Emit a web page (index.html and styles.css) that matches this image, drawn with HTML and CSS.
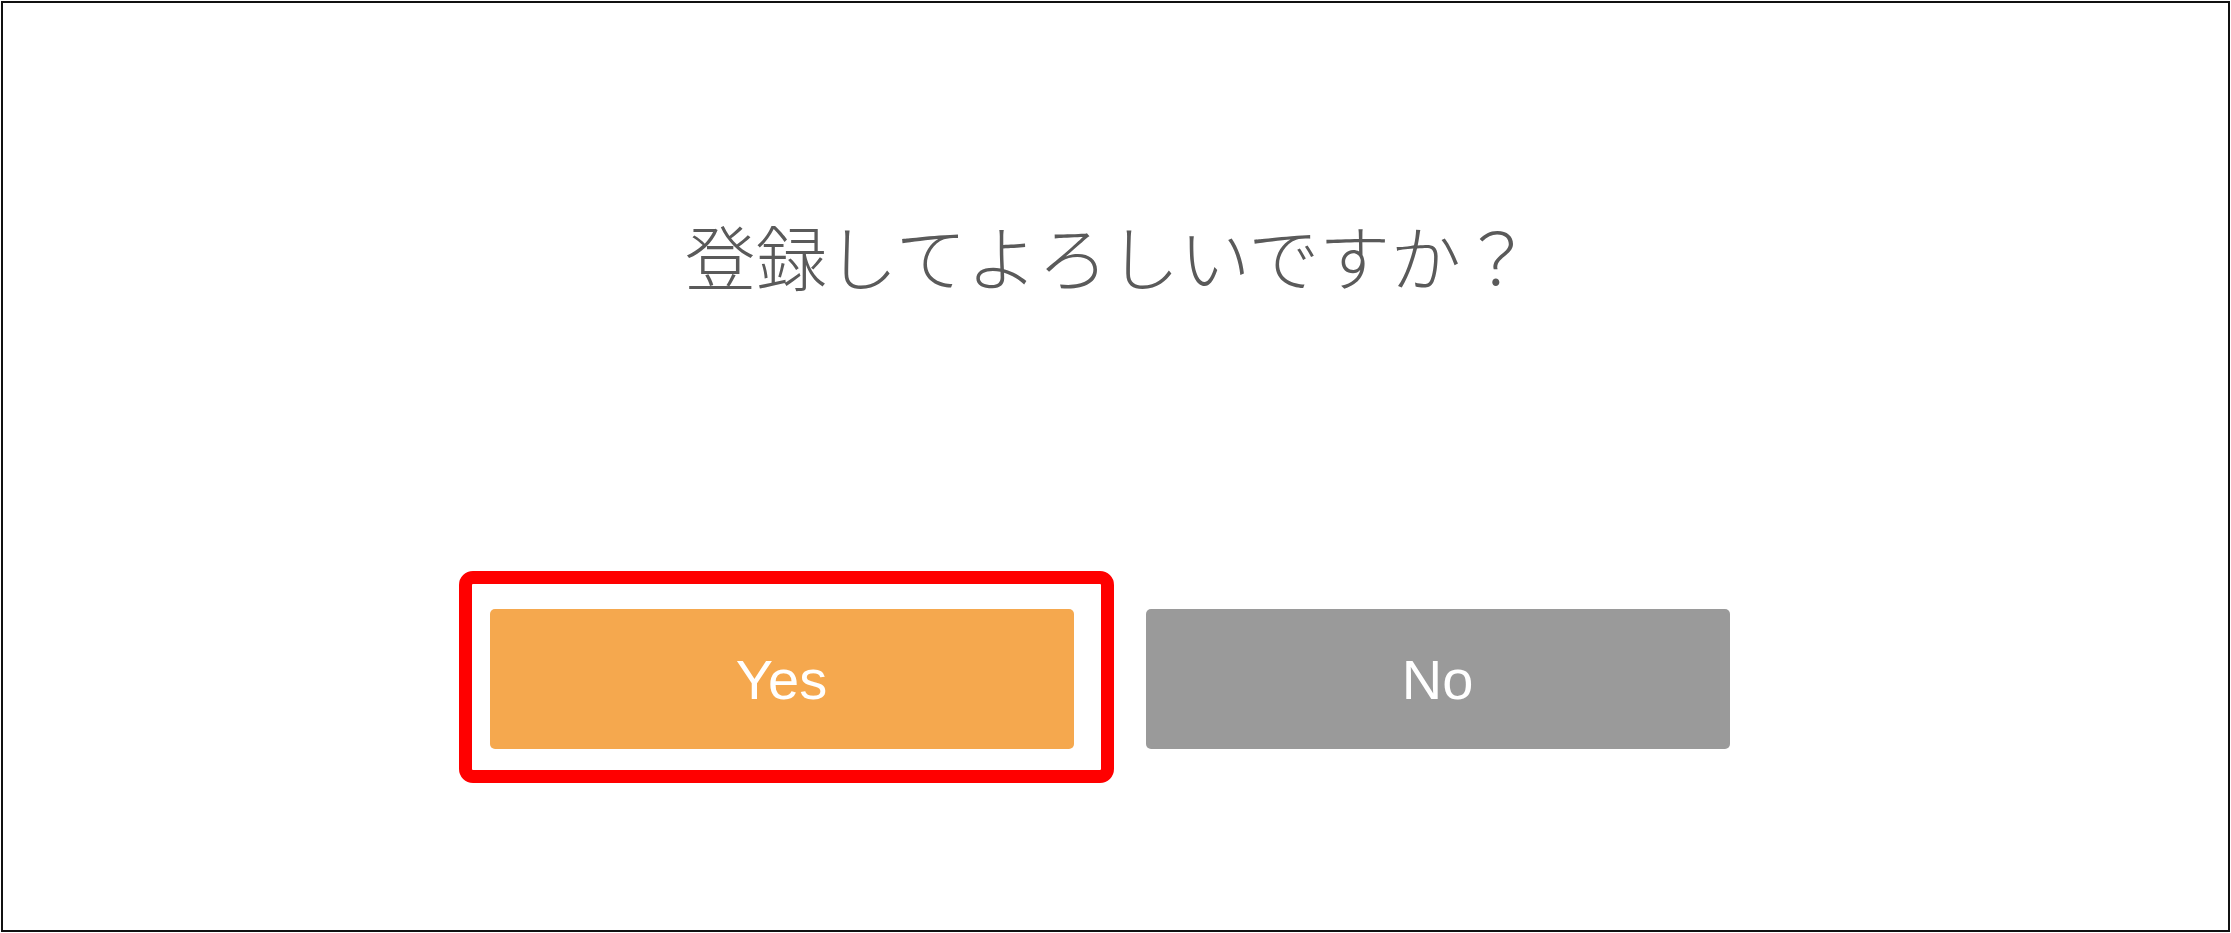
FILE: index.html
```html
<!DOCTYPE html>
<html lang="ja">
<head>
  <meta charset="UTF-8" />
  <meta name="viewport" content="width=device-width, initial-scale=1" />
  <title>登録確認</title>
  <link rel="stylesheet" href="styles.css">
</head>
<body>

  <div class="confirm-frame">
    <p class="confirm-message">登録してよろしいですか？</p>

    <div class="confirm-actions">
      <div class="yes-wrap">
        <button type="button" class="btn btn-yes">Yes</button>
        <span class="highlight"></span>
      </div>
      <button type="button" class="btn btn-no">No</button>
    </div>
  </div>

</body>
</html>
```

FILE: styles.css
```css
html, body {
  margin: 0;
  padding: 0;
  background: #ffffff;
}

body {
  font-family: "Liberation Sans", Arial, sans-serif;
  width: 2231px;
  height: 933px;
  padding: 1px;
  box-sizing: border-box;
}

.confirm-frame {
  height: 100%;
  box-sizing: border-box;
  border: 2px solid #111111;
  background: #ffffff;
}

.confirm-message {
  margin: 0;
  padding: 216px 14px 0 0;
  text-align: center;
  font-family: "Noto Sans CJK JP", sans-serif;
  font-weight: 300;
  font-size: 71px;
  line-height: 71px;
  color: #5a5a5a;
}

.confirm-actions {
  display: flex;
  justify-content: center;
  gap: 72px;
  margin-top: 319px;
  padding-right: 12px;
}

.yes-wrap {
  position: relative;
}

.btn {
  display: block;
  width: 584px;
  height: 140px;
  border: none;
  border-radius: 5px;
  color: #ffffff;
  font-family: "Liberation Sans", Arial, sans-serif;
  font-size: 56px;
  padding: 0;
  cursor: pointer;
}

.btn-yes {
  background-color: #f5a84e;
}

.btn-no {
  background-color: #9a9a9a;
}

.highlight {
  position: absolute;
  top: -38px;
  left: -31px;
  right: -40px;
  bottom: -34px;
  border: 13px solid #ff0000;
  border-radius: 14px;
  pointer-events: none;
}
```
